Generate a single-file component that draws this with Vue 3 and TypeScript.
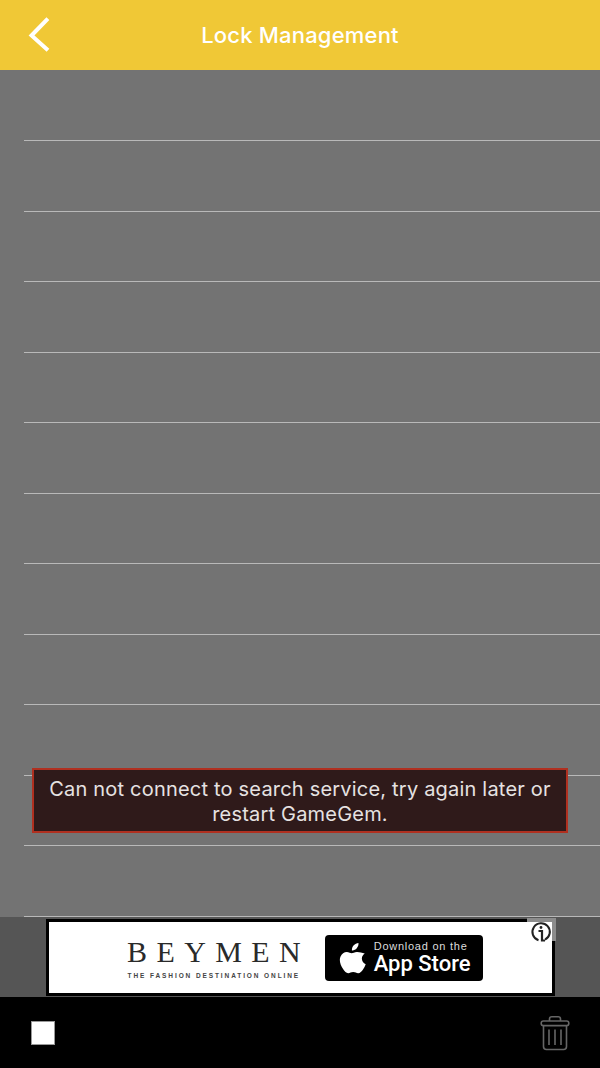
<template>
  <div class="screen">
    <header class="nav-bar">
      <button class="back-btn" type="button" aria-label="Back">
        <svg width="26" height="40" viewBox="0 0 26 40">
          <path d="M21.500 5 L6.500 20.500 L21.500 34" fill="none" stroke="#fff" stroke-width="4" stroke-linecap="square" stroke-linejoin="miter" />
        </svg>
      </button>
      <h1 class="nav-title">Lock Management</h1>
    </header>

    <main class="lock-list">
      <div v-for="row in rows" :key="row" class="lock-row"></div>
      <div class="toast">Can not connect to search service, try again later or restart GameGem.</div>
    </main>

    <section class="ad-strip">
      <div class="ad-banner">
        <div class="brand">
          <span class="brand-name">BEYMEN</span>
          <span class="brand-tag">THE FASHION DESTINATION ONLINE</span>
        </div>
        <div class="store-badge">
          <svg class="apple" width="27" height="32" viewBox="0 0 28 33">
            <path d="M20.2 1c.2 2.200-.6 4-1.800 5.400-1.300 1.500-3.100 2.500-5 2.300-.2-2 .7-4 1.900-5.300C16.500 2 18.500 1.100 20.200 1z" fill="#fff" />
            <path d="M26.700 11.800c-1.800 1.200-3 3-3 5.300 0 2.700 1.600 4.800 4 5.800-.7 2-1.600 3.800-2.800 5.500-1.500 2.100-2.900 3.800-5 3.800-2 0-2.700-1.200-5.200-1.200-2.400 0-3.200 1.200-5.100 1.200-2.100.1-3.700-2-5.200-4.100C1.500 24.500-.1 19.100 1.500 15.300c1.300-3 3.900-4.800 6.600-4.900 2.100 0 3.900 1.300 5.100 1.300 1.200 0 3.300-1.500 5.700-1.300 2.500.1 5.200 1 7.800 1.400z" fill="#fff" />
          </svg>
          <div class="store-text">
            <span class="store-small">Download on the</span>
            <span class="store-big">App Store</span>
          </div>
        </div>
        <div class="ad-info">
          <svg width="22" height="22" viewBox="0 0 22 22">
            <path d="M8.500 19.200 A8.700 8.700 0 1 1 15 18.700" fill="none" stroke="#222" stroke-width="2" />
            <circle cx="11" cy="6.500" r="1.400" fill="#222" />
            <path d="M8.500 10 H12 V19.500 H15" fill="none" stroke="#222" stroke-width="2.200" />
          </svg>
        </div>
      </div>
    </section>

    <footer class="tool-bar">
      <span class="stop-icon"></span>
      <svg class="trash-icon" width="30" height="36" viewBox="0 0 30 36">
        <g fill="none" stroke="#666" stroke-width="1.600">
          <path d="M9.500 6 V4 Q9.500 1.800 11.700 1.800 H18.300 Q20.500 1.800 20.500 4 V6" />
          <rect x="1.200" y="6" width="27.600" height="4.600" rx="2.200" />
          <path d="M3.500 10.600 V31.500 Q3.500 34.500 6.500 34.500 H23.500 Q26.500 34.500 26.500 31.500 V10.600" />
          <path d="M9 14.500 V30 M15 14.500 V30 M21 14.500 V30" />
        </g>
      </svg>
    </footer>
  </div>
</template>

<script setup lang="ts">
const rows: number[] = Array.from({ length: 12 }, (_, i) => i)
</script>

<style>
html,
body {
  margin: 0;
  background: #000;
}
</style>

<style scoped>
.screen {
  width: 600px;
  height: 1068px;
  display: flex;
  flex-direction: column;
  overflow: hidden;
  font-family: Inter, "Liberation Sans", sans-serif;
}

.nav-bar {
  flex: 0 0 70px;
  display: flex;
  align-items: center;
  justify-content: center;
  position: relative;
  background: #f0c836;
}

.back-btn {
  position: absolute;
  left: 25px;
  top: 15px;
  padding: 0;
  border: none;
  background: none;
  line-height: 0;
}

.nav-title {
  margin: 0;
  font-size: 22px;
  font-weight: 500;
  letter-spacing: 0.2px;
  color: #fff;
}

.lock-list {
  flex: 0 0 847px;
  box-sizing: border-box;
  padding-top: 0.5px;
  position: relative;
  background: #737373;
}

.lock-row {
  height: 70.5px;
  box-sizing: border-box;
  margin-left: 24px;
  border-bottom: 1px solid #b9b9b9;
}

.toast {
  position: absolute;
  left: 32px;
  top: 698px;
  width: 536px;
  height: 65px;
  box-sizing: border-box;
  padding: 7px 12px;
  border: 2px solid #b03020;
  background: #2f1a1a;
  color: #e6e2e2;
  font-size: 20px;
  line-height: 25px;
  letter-spacing: 0.2px;
  text-align: center;
}

.ad-strip {
  flex: 0 0 80px;
  display: flex;
  justify-content: center;
  box-sizing: border-box;
  padding: 2px 0 1px 1px;
  background: #555;
}

.ad-banner {
  width: 509px;
  height: 77px;
  box-sizing: border-box;
  position: relative;
  display: flex;
  align-items: center;
  gap: 24px;
  padding-left: 78px;
  border: 3px solid #000;
  background: #fff;
}

.brand {
  display: flex;
  flex-direction: column;
  align-items: center;
  gap: 8px;
  margin-top: 4px;
}

.brand-name {
  font-family: "Liberation Serif", serif;
  font-size: 30px;
  line-height: 24px;
  letter-spacing: 9.400px;
  margin-right: -9.400px;
  color: #2a2a2a;
}

.brand-tag {
  font-family: "Liberation Sans", sans-serif;
  font-size: 6.500px;
  line-height: 8px;
  font-weight: 700;
  letter-spacing: 1.900px;
  color: #444;
  white-space: nowrap;
}

.store-badge {
  width: 158px;
  height: 46px;
  box-sizing: border-box;
  display: flex;
  align-items: center;
  gap: 8px;
  padding-left: 14px;
  border-radius: 4px;
  background: #000;
}

.store-text {
  display: flex;
  flex-direction: column;
  color: #fff;
  font-family: "Liberation Sans", sans-serif;
}

.store-small {
  font-size: 11px;
  line-height: 12px;
  letter-spacing: 0.750px;
  color: #ddd;
}

.store-big {
  font-family: Roboto, "Liberation Sans", sans-serif;
  font-size: 22px;
  line-height: 24px;
  font-weight: 500;
}

.ad-info {
  position: absolute;
  right: -4px;
  top: -4px;
  width: 29px;
  height: 23px;
  display: flex;
  align-items: center;
  justify-content: flex-start;
  box-sizing: border-box;
  padding-left: 3px;
  border-top: 4px solid #8c8c8c;
  border-right: 4px solid #8c8c8c;
  background: #fff;
}

.tool-bar {
  flex: 1;
  display: flex;
  align-items: center;
  justify-content: space-between;
  padding: 0 30px 0 31px;
  background: #000;
}

.stop-icon {
  width: 24px;
  height: 24px;
  box-sizing: border-box;
  border: 1px solid #999;
  background: #fff;
}

.trash-icon {
  display: block;
}
</style>
